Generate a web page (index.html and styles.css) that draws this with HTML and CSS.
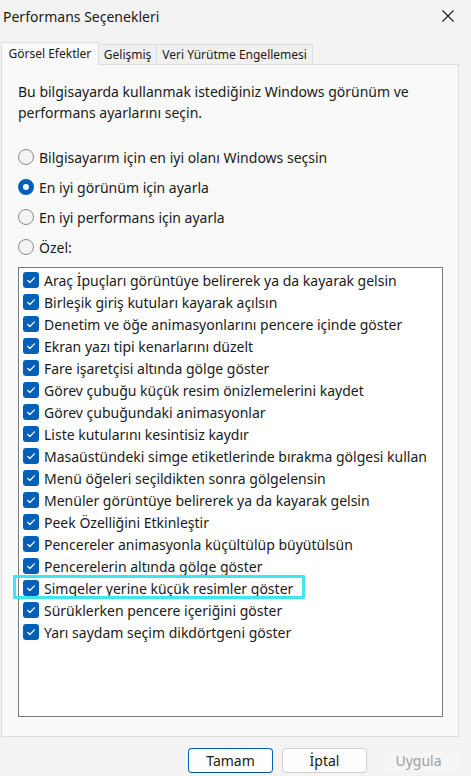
FILE: index.html
```html
<!DOCTYPE html>
<html lang="tr">
<head>
<meta charset="utf-8">
<title>Performans Seçenekleri</title>
<link rel="stylesheet" href="styles.css">
</head>
<body>
<div class="window">
  <header class="titlebar">
    <span class="title">Performans Seçenekleri</span>
    <button class="close" aria-label="Kapat">
      <svg width="12" height="12" viewBox="0 0 12 12"><path d="M0.5 0.5 L11.5 11.5 M11.5 0.5 L0.5 11.5" stroke="#1b1b1b" stroke-width="1.1" fill="none"/></svg>
    </button>
  </header>

  <nav class="tabs">
    <span class="tab active">Görsel Efektler</span>
    <span class="tab">Gelişmiş</span>
    <span class="tab">Veri Yürütme Engellemesi</span>
  </nav>

  <section class="panel">
    <p class="intro">Bu bilgisayarda kullanmak istediğiniz Windows görünüm ve performans ayarlarını seçin.</p>

    <div class="radios">
      <label class="radio"><span class="dot"></span>Bilgisayarım için en iyi olanı Windows seçsin</label>
      <label class="radio"><span class="dot on"></span>En iyi görünüm için ayarla</label>
      <label class="radio"><span class="dot"></span>En iyi performans için ayarla</label>
      <label class="radio"><span class="dot"></span>Özel:</label>
    </div>

    <ul class="listbox">
      <li class="item"><span class="check"></span>Araç İpuçları görüntüye belirerek ya da kayarak gelsin</li>
      <li class="item"><span class="check"></span>Birleşik giriş kutuları kayarak açılsın</li>
      <li class="item"><span class="check"></span>Denetim ve öğe animasyonlarını pencere içinde göster</li>
      <li class="item"><span class="check"></span>Ekran yazı tipi kenarlarını düzelt</li>
      <li class="item"><span class="check"></span>Fare işaretçisi altında gölge göster</li>
      <li class="item"><span class="check"></span>Görev çubuğu küçük resim önizlemelerini kaydet</li>
      <li class="item"><span class="check"></span>Görev çubuğundaki animasyonlar</li>
      <li class="item"><span class="check"></span>Liste kutularını kesintisiz kaydır</li>
      <li class="item"><span class="check"></span>Masaüstündeki simge etiketlerinde bırakma gölgesi kullan</li>
      <li class="item"><span class="check"></span>Menü öğeleri seçildikten sonra gölgelensin</li>
      <li class="item"><span class="check"></span>Menüler görüntüye belirerek ya da kayarak gelsin</li>
      <li class="item"><span class="check"></span>Peek Özelliğini Etkinleştir</li>
      <li class="item"><span class="check"></span>Pencereler animasyonla küçültülüp büyütülsün</li>
      <li class="item"><span class="check"></span>Pencerelerin altında gölge göster</li>
      <li class="item marked"><span class="check"></span>Simgeler yerine küçük resimler göster</li>
      <li class="item"><span class="check"></span>Sürüklerken pencere içeriğini göster</li>
      <li class="item"><span class="check"></span>Yarı saydam seçim dikdörtgeni göster</li>
    </ul>
  </section>

  <footer class="buttons">
    <button class="btn primary">Tamam</button>
    <button class="btn">İptal</button>
    <button class="btn disabled">Uygula</button>
  </footer>
</div>
</body>
</html>
```

FILE: styles.css
```css
html, body {
  margin: 0;
  padding: 0;
  background: #f3f3f3;
}

.window {
  width: 471px;
  height: 776px;
  font-family: "Noto Sans", "Open Sans", sans-serif;
  color: #1a1a1a;
  overflow: hidden;
}

.titlebar {
  height: 32px;
  display: flex;
  align-items: center;
  justify-content: space-between;
  padding-left: 3px;
}

.title {
  font-size: 14px;
}

.close {
  width: 46px;
  height: 32px;
  border: 0;
  background: transparent;
  display: flex;
  align-items: center;
  justify-content: center;
  padding: 0;
  margin-right: 0;
}

.tabs {
  display: flex;
  align-items: flex-end;
  margin-top: 10px;
  padding-left: 1px;
  height: 22px;
  position: relative;
  z-index: 1;
}

.tab {
  font-size: 12px;
  height: 20px;
  line-height: 19px;
  padding: 0 5px;
  box-sizing: border-box;
  border: 1px solid #dcdcdc;
  border-bottom: 0;
  background: #f0f0f0;
  margin-left: -1px;
}

.tab:first-child {
  margin-left: 0;
}

.tab.active {
  height: 23px;
  line-height: 21px;
  background: #f9f9f9;
  padding: 0 6.5px;
  margin-bottom: -1px;
}

.panel {
  margin-left: 1px;
  width: 458px;
  height: 673px;
  box-sizing: border-box;
  background: #f9f9f9;
  border: 1px solid #dcdcdc;
  padding: 16px 15px 0 16px;
}

.intro {
  margin: 0;
  font-size: 14px;
  line-height: 21px;
  padding-right: 20px;
}

.radios {
  margin-top: 19px;
  display: flex;
  flex-direction: column;
}

.radio {
  display: flex;
  align-items: center;
  gap: 5px;
  height: 30px;
  font-size: 14px;
}

.dot {
  width: 16px;
  height: 16px;
  box-sizing: border-box;
  border-radius: 50%;
  border: 1px solid #8b8b8b;
  background: #f4f4f4;
  flex: none;
}

.dot.on {
  border: 5px solid #005fb8;
  background: #ffffff;
}

.listbox {
  list-style: none;
  margin: 5px 0 0 0;
  padding: 1px 0 0 4px;
  height: 450px;
  box-sizing: border-box;
  background: #ffffff;
  border: 1px solid #7a7a7a;
}

.item {
  position: relative;
  display: flex;
  align-items: center;
  gap: 5px;
  height: 22px;
  font-size: 14px;
  white-space: nowrap;
}

.check {
  width: 16px;
  height: 16px;
  border-radius: 3px;
  background: #005fb8 url("data:image/svg+xml,%3Csvg xmlns='http://www.w3.org/2000/svg' width='16' height='16' viewBox='0 0 16 16'%3E%3Cpath d='M4.6 8.3 L6.9 10.5 L11.4 5.8' fill='none' stroke='white' stroke-width='1.2' stroke-linecap='round' stroke-linejoin='round'/%3E%3C/svg%3E") center/16px 16px no-repeat;
  flex: none;
}

/* cyan focus frame drawn over the row */
.item.marked::after {
  content: "";
  position: absolute;
  left: -10px;
  top: -2px;
  width: 292px;
  height: 24px;
  box-sizing: border-box;
  border: 3px solid #3fe6ee;
  border-radius: 1px;
}

.buttons {
  display: flex;
  justify-content: flex-end;
  gap: 9px;
  padding: 11px 10px 0 0;
}

.btn {
  width: 85px;
  height: 25px;
  box-sizing: border-box;
  font-family: inherit;
  font-size: 14px;
  color: #1a1a1a;
  background: #fdfdfd;
  border: 1px solid #d0d0d0;
  border-radius: 4px;
  padding: 0;
}

.btn.primary {
  border: 1px solid #005fb8;
  border-bottom-color: #00519e;
}

.btn.disabled {
  background: #f5f5f5;
  border-color: #f0f0f0;
  color: #a0a0a0;
}
```
